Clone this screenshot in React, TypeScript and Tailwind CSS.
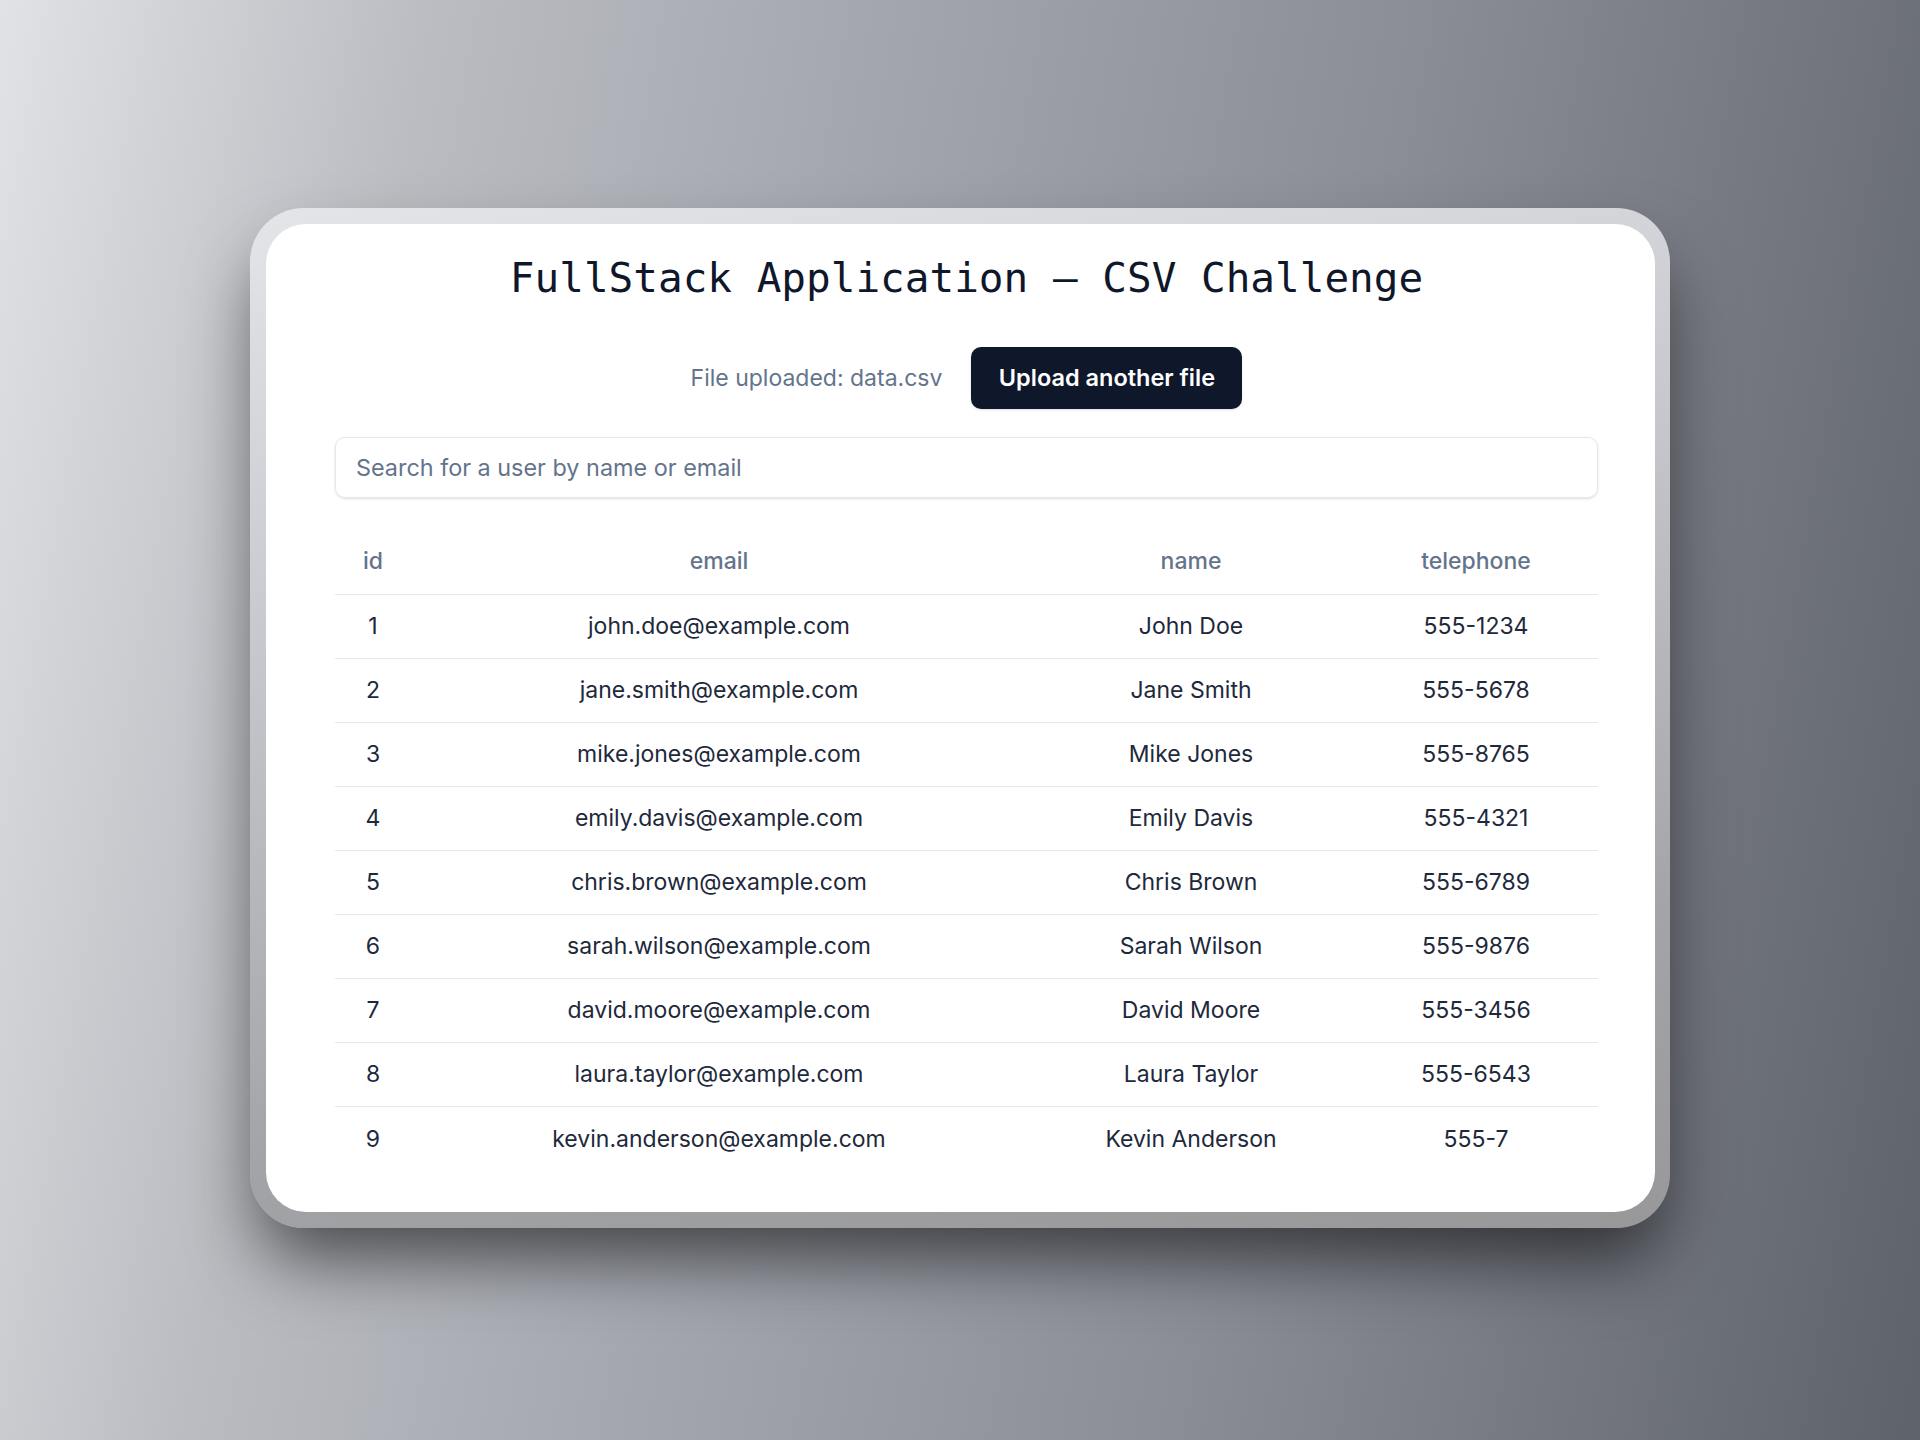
import React from "react";

type User = { id: number; email: string; name: string; telephone: string };

const users: User[] = [
  { id: 1, email: "john.doe@example.com", name: "John Doe", telephone: "555-1234" },
  { id: 2, email: "jane.smith@example.com", name: "Jane Smith", telephone: "555-5678" },
  { id: 3, email: "mike.jones@example.com", name: "Mike Jones", telephone: "555-8765" },
  { id: 4, email: "emily.davis@example.com", name: "Emily Davis", telephone: "555-4321" },
  { id: 5, email: "chris.brown@example.com", name: "Chris Brown", telephone: "555-6789" },
  { id: 6, email: "sarah.wilson@example.com", name: "Sarah Wilson", telephone: "555-9876" },
  { id: 7, email: "david.moore@example.com", name: "David Moore", telephone: "555-3456" },
  { id: 8, email: "laura.taylor@example.com", name: "Laura Taylor", telephone: "555-6543" },
  { id: 9, email: "kevin.anderson@example.com", name: "Kevin Anderson", telephone: "555-7" },
];

const cols = "grid grid-cols-[76px_616px_328px_242px] items-center text-center";

function UserTable({ rows }: { rows: User[] }) {
  return (
    <div className="mt-[33px] w-full text-[23px]">
      {/* header */}
      <div className={`${cols} h-[64px] border-b border-[#e2e8f0] pb-[3px] font-medium text-[#64748b]`}>
        <div>id</div>
        <div>email</div>
        <div>name</div>
        <div>telephone</div>
      </div>
      {rows.map((u, i) => (
        <div
          key={u.id}
          className={`${cols} h-[64px] text-[#1e293b] ${
            i < rows.length - 1 ? "border-b border-[#e2e8f0]" : ""
          }`}
        >
          <div>{u.id}</div>
          <div>{u.email}</div>
          <div>{u.name}</div>
          <div>{u.telephone}</div>
        </div>
      ))}
    </div>
  );
}

export default function App() {
  return (
    <div className="min-h-screen w-full bg-[linear-gradient(100deg,#e0e2e6_0%,#babcc1_20%,#a4a7af_40%,#8a8d96_66%,#5e626a_100%)] pt-[208px] pl-[250px] font-['Inter',sans-serif]">
      {/* device frame */}
      <div className="w-[1420px] rounded-[54px] bg-[linear-gradient(170deg,#e4e5e9_0%,#c6c8cd_35%,#a3a4a7_75%,#98989a_100%)] pt-[16px] pb-[16px] pl-[16px] pr-[15px] shadow-[0_40px_70px_-10px_rgba(0,0,0,0.6)]">
        <div className="rounded-[40px] bg-white pt-[29px] pb-[41px] pl-[69px] pr-[57px] text-[23px] leading-none">
          <h1 className="text-center font-['DejaVu_Sans_Mono',monospace] text-[41px] leading-[50px] font-normal text-[#0f172a]">
            FullStack Application – CSV Challenge
          </h1>

          <div className="mt-[44px] flex items-center justify-center gap-[29px]">
            <span className="text-[#64748b]">File uploaded: data.csv</span>
            <button className="flex h-[62px] w-[271px] items-center justify-center rounded-[10px] bg-[#0f172a] text-[23.5px] font-semibold text-white shadow-sm">
              Upload another file
            </button>
          </div>

          <input
            type="text"
            placeholder="Search for a user by name or email"
            className="mt-[28px] block h-[61px] w-full rounded-[10px] border border-[#e2e8f0] px-[20px] text-[23.4px] text-[#1e293b] shadow-sm outline-none placeholder:text-[#64748b]"
          />

          <UserTable rows={users} />
        </div>
      </div>
    </div>
  );
}
